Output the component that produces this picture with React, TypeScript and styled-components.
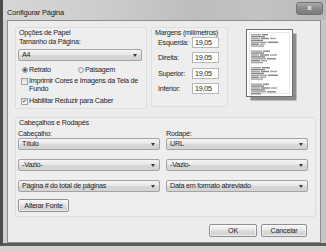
import React from "react";
import styled, { createGlobalStyle } from "styled-components";

const Global = createGlobalStyle`
  html, body { margin: 0; padding: 0; background: #cfcfcf; }
  body { font-family: "Liberation Sans", Arial, sans-serif; }
  * { box-sizing: border-box; }
`;

const Desktop = styled.div`
  width: 326px;
  height: 251px;
  overflow: hidden;
  background: #d2d2d2;
`;

const Window = styled.div`
  width: 326px;
  height: 246px;
  display: flex;
  flex-direction: column;
  border-left: 3px solid #4c4c4c;
  border-bottom: 3px solid #5a5a5a;
  background: linear-gradient(90deg, #cfcfcf 0%, #c9c9c9 45%, #b9b9b9 75%, #c6c6c6 100%);
`;

const TitleBar = styled.div`
  height: 20px;
  flex: none;
  display: flex;
  align-items: flex-start;
  justify-content: space-between;
  padding: 2px 3px 0 4px;
  background: linear-gradient(90deg, #d6d6d6 0%, #cdcdcd 30%, #bdbdbd 60%, #c3c3c3 80%, #b8b8b8 100%);
`;

const Title = styled.span`
  font-size: 7.5px;
  letter-spacing: -0.2px;
  line-height: 8px;
  margin-top: 7px;
  color: #1a1a1a;
`;

const CloseButton = styled.div`
  width: 27px;
  height: 13px;
  border: 1px solid #727272;
  border-radius: 3px;
  background: linear-gradient(#a9a9a9, #8a8a8a 50%, #7c7c7c);
  color: #f2f2f2;
  font-size: 8px;
  font-weight: bold;
  line-height: 10px;
  text-align: center;
`;

const Client = styled.div`
  margin-left: 4px;
  width: 314px;
  height: 223px;
  border: 1px solid #8e8e8e;
  background: #ececec;
  padding: 6px 0 0 7px;
  display: flex;
  flex-direction: column;
  font-size: 7.2px;
  letter-spacing: -0.25px;
  color: #1e1e1e;
`;

const TopRow = styled.div`
  display: flex;
  align-items: flex-start;
`;

const Group = styled.div<{ $w: number; $h: number; $ml?: number; $mt?: number }>`
  width: ${(p) => p.$w}px;
  height: ${(p) => p.$h}px;
  margin-left: ${(p) => p.$ml ?? 0}px;
  margin-top: ${(p) => p.$mt ?? 0}px;
  border: 1px solid #dedede;
  border-radius: 2px;
  background: #eeeeee;
  padding: 1px 0 0 2px;
  display: flex;
  flex-direction: column;
`;

const Label = styled.div<{ $mt?: number; $ml?: number }>`
  line-height: 8px;
  height: 8px;
  margin-top: ${(p) => p.$mt ?? 0}px;
  margin-left: ${(p) => p.$ml ?? 0}px;
  white-space: nowrap;
`;

const Select = styled.div<{ $w: number; $mt?: number }>`
  width: ${(p) => p.$w}px;
  height: 12px;
  margin-top: ${(p) => p.$mt ?? 0}px;
  border: 1px solid #a3a3a3;
  border-radius: 2px;
  background: linear-gradient(#f5f5f5, #e7e7e7 45%, #d8d8d8 55%, #d3d3d3);
  display: flex;
  align-items: center;
  justify-content: space-between;
  padding: 0 4px 0 3px;
  line-height: 10px;
  white-space: nowrap;
`;

const Arrow = styled.span`
  width: 0;
  height: 0;
  border-left: 2.5px solid transparent;
  border-right: 2.5px solid transparent;
  border-top: 3px solid #3a3a3a;
`;

const OptionRow = styled.div<{ $mt?: number; $ml?: number }>`
  display: flex;
  align-items: flex-start;
  margin-top: ${(p) => p.$mt ?? 0}px;
  margin-left: ${(p) => p.$ml ?? 0}px;
  line-height: 8.5px;
`;

const Radio = styled.span<{ $on?: boolean }>`
  width: 6px;
  height: 6px;
  border-radius: 50%;
  border: 1px solid #9a9a9a;
  background: ${(p) =>
    p.$on
      ? "radial-gradient(circle, #555 0 1.4px, #cfcfcf 1.8px)"
      : "linear-gradient(#e2e2e2, #f4f4f4)"};
  margin: 1px 1px 0 0;
  flex: none;
`;

const RadioItem = styled.div<{ $w: number }>`
  width: ${(p) => p.$w}px;
  display: flex;
  align-items: flex-start;
`;

const Check = styled.span<{ $on?: boolean }>`
  width: 7px;
  height: 7px;
  border: 1px solid #a0a0a0;
  background: linear-gradient(#dedede, #f5f5f5);
  margin: 1px 1px 0 0;
  flex: none;
  font-size: 6px;
  line-height: 5px;
  text-align: center;
  color: #333;
  letter-spacing: 0;
`;

const MarginRow = styled.div<{ $mt: number }>`
  display: flex;
  align-items: center;
  margin-top: ${(p) => p.$mt}px;
  padding-left: 4px;
`;

const MarginLabel = styled.span`
  width: 34px;
  line-height: 8px;
  white-space: nowrap;
`;

const NumberInput = styled.div`
  width: 27px;
  height: 11px;
  border: 1px solid #b8b8b8;
  background: #fff;
  padding-left: 2px;
  line-height: 9px;
`;

const PreviewWrap = styled.div`
  margin: 2px 0 0 18px;
  width: 51px;
  height: 72px;
`;

const Columns = styled.div`
  display: flex;
  gap: 6px;
`;

const Column = styled.div`
  display: flex;
  flex-direction: column;
  width: 142px;
`;

const Button = styled.div<{ $w: number; $mt?: number }>`
  width: ${(p) => p.$w}px;
  height: 13px;
  margin-top: ${(p) => p.$mt ?? 0}px;
  border: 1px solid #8f8f8f;
  border-radius: 2px;
  background: linear-gradient(#f6f6f6, #e8e8e8 45%, #d9d9d9 55%, #d2d2d2);
  box-shadow: inset 0 0 0 1px rgba(255, 255, 255, 0.6);
  display: flex;
  align-items: center;
  justify-content: center;
  line-height: 9px;
  white-space: nowrap;
`;

const Footer = styled.div`
  display: flex;
  justify-content: flex-end;
  gap: 4px;
  margin-top: 7px;
  padding-right: 13px;
`;

const blocks: number[][][] = [
  [[10, 6], [14], [9, 8, 6], [12], [16, 10], [8, 5], [13]],
  [[11, 7], [13], [8, 9, 7], [14], [15, 9], [9, 6], [12]],
  [[10, 8], [14], [9, 8, 7], [13], [16, 10], [8, 6], [12]],
  [[11, 6], [13], [9, 9, 6], [14], [15, 9], [10]],
];

function PagePreview() {
  const lines: React.ReactElement[] = [];
  blocks.forEach((b, bi) => {
    const top = 5 + bi * 16.5;
    b.forEach((segs, li) => {
      let x = 5;
      segs.forEach((w, si) => {
        lines.push(
          <rect
            key={`${bi}-${li}-${si}`}
            x={x}
            y={top + li * 1.9}
            width={w}
            height={1.4}
            fill={(li + si) % 2 ? "#858585" : "#a3a3a3"}
          />
        );
        x += w + 1;
      });
    });
  });
  return (
    <svg width="51" height="72" viewBox="0 0 51 72">
      <rect x="4.5" y="4.5" width="46" height="67" fill="#8c8c8c" />
      <rect x="0.5" y="0.5" width="46" height="67" fill="#ffffff" stroke="#6e6e6e" />
      <rect
        x="3.5"
        y="3.5"
        width="40"
        height="61"
        fill="none"
        stroke="#c4c4c4"
        strokeWidth="0.8"
        strokeDasharray="1 1"
      />
      {lines}
    </svg>
  );
}

export default function App() {
  return (
    <Desktop>
      <Global />
      <Window>
        <TitleBar>
          <Title>Configurar Página</Title>
          <CloseButton>x</CloseButton>
        </TitleBar>
        <Client>
          <TopRow>
            <Group $w={132} $h={82}>
              <Label $ml={1}>Opções de Papel</Label>
              <Label $mt={1} $ml={1}>Tamanho da Página:</Label>
              <Select $w={124} $mt={3}>
                A4
                <Arrow />
              </Select>
              <OptionRow $mt={5} $ml={4}>
                <RadioItem $w={56}>
                  <Radio $on />
                  Retrato
                </RadioItem>
                <RadioItem $w={50}>
                  <Radio />
                  Paisagem
                </RadioItem>
              </OptionRow>
              <OptionRow $mt={2} $ml={3}>
                <Check />
                <span>
                  Imprimir Cores e Imagens da Tela de
                  <br />
                  Fundo
                </span>
              </OptionRow>
              <OptionRow $mt={3} $ml={3}>
                <Check $on>✓</Check>
                Habilitar Reduzir para Caber
              </OptionRow>
            </Group>
            <Group $w={77} $h={80} $ml={4}>
              <Label $ml={1}>Margens (milímetros)</Label>
              <MarginRow $mt={0}>
                <MarginLabel>Esquerda:</MarginLabel>
                <NumberInput>19,05</NumberInput>
              </MarginRow>
              <MarginRow $mt={4}>
                <MarginLabel>Direita:</MarginLabel>
                <NumberInput>19,05</NumberInput>
              </MarginRow>
              <MarginRow $mt={5}>
                <MarginLabel>Superior:</MarginLabel>
                <NumberInput>19,05</NumberInput>
              </MarginRow>
              <MarginRow $mt={4}>
                <MarginLabel>Inferior:</MarginLabel>
                <NumberInput>19,05</NumberInput>
              </MarginRow>
            </Group>
            <PreviewWrap>
              <PagePreview />
            </PreviewWrap>
          </TopRow>
          <Group $w={301} $h={100} $mt={8}>
            <Label $ml={1}>Cabeçalhos e Rodapés</Label>
            <Columns>
              <Column>
                <Label $mt={3}>Cabeçalho:</Label>
                <Select $w={142}>
                  Título
                  <Arrow />
                </Select>
                <Select $w={142} $mt={9}>
                  -Vazio-
                  <Arrow />
                </Select>
                <Select $w={142} $mt={9}>
                  Página # do total de páginas
                  <Arrow />
                </Select>
                <Button $w={51} $mt={7}>Alterar Fonte</Button>
              </Column>
              <Column>
                <Label $mt={3}>Rodapé:</Label>
                <Select $w={142}>
                  URL
                  <Arrow />
                </Select>
                <Select $w={142} $mt={9}>
                  -Vazio-
                  <Arrow />
                </Select>
                <Select $w={142} $mt={9}>
                  Data em formato abreviado
                  <Arrow />
                </Select>
              </Column>
            </Columns>
          </Group>
          <Footer>
            <Button $w={48}>OK</Button>
            <Button $w={46}>Cancelar</Button>
          </Footer>
        </Client>
      </Window>
    </Desktop>
  );
}
